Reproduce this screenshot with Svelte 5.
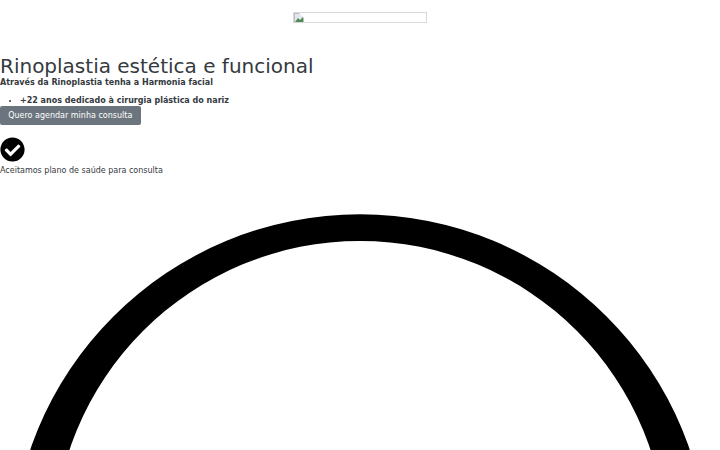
<script>
  const checkPath = "M504 256c0 136.967-111.033 248-248 248S8 392.967 8 256 119.033 8 256 8s248 111.033 248 248zM227.314 387.314l184-184c6.248-6.248 6.248-16.379 0-22.627l-22.627-22.627c-6.248-6.249-16.379-6.249-22.628 0L216 308.118l-70.059-70.059c-6.248-6.248-16.379-6.248-22.628 0l-22.627 22.627c-6.248 6.248-6.248 16.379 0 22.627l104 104c6.249 6.249 16.379 6.249 22.628.001z";
  const ringPath = "M8 256a248 248 0 1 0 496 0a248 248 0 1 0 -496 0zM38 245a218 218 0 1 1 436 0a218 218 0 1 1 -436 0z";
</script>

<main class="page">
  <header class="logo-row">
    <div class="broken-image">
      <svg class="broken-icon" viewBox="0 0 10 10" aria-hidden="true">
        <rect x="0.5" y="0.5" width="9" height="9" fill="#e4e8ee" stroke="#b9bec4" />
        <path d="M1 9 L4 5 L6 7 L9 4 V9 Z" fill="#4f8a55" />
        <path d="M5 0 L10 0 L10 5 Z" fill="#fff" />
      </svg>
    </div>
  </header>

  <section class="hero">
    <h1>Rinoplastia estética e funcional</h1>
    <p class="subtitle">Através da Rinoplastia tenha a Harmonia facial</p>
    <ul>
      <li>+22 anos dedicado à cirurgia plástica do nariz</li>
    </ul>
    <button type="button">Quero agendar minha consulta</button>
  </section>

  <section class="insurance">
    <svg class="check" viewBox="0 0 512 512" aria-hidden="true"><path d={checkPath} /></svg>
    <p>Aceitamos plano de saúde para consulta</p>
  </section>

  <svg class="ring" viewBox="0 0 512 512" aria-hidden="true"><path fill-rule="evenodd" d={ringPath} /></svg>
</main>

<style>
  :global(body) {
    margin: 0;
    background: #fff;
  }
  .page {
    font-family: "DejaVu Sans", sans-serif;
    color: #343a40;
    font-size: 8px;
    overflow-x: hidden;
  }
  .logo-row {
    display: flex;
    justify-content: center;
    padding-top: 12px;
  }
  .broken-image {
    width: 132px;
    height: 9px;
    border: 1px solid #d9d9d9;
    overflow: hidden;
  }
  .broken-icon {
    display: block;
    width: 10px;
    height: 10px;
  }
  h1 {
    margin: 31px 0 0;
    font-size: 20px;
    font-weight: 400;
    line-height: 24px;
  }
  .subtitle {
    margin: 0;
    font-weight: 700;
    line-height: 9px;
  }
  ul {
    margin: 9px 0 0;
    padding: 0 0 0 20px;
    font-weight: 700;
    line-height: 10px;
  }
  button {
    display: block;
    width: 140.5px;
    height: 19px;
    padding: 0;
    border: 0;
    border-radius: 2px;
    background: #6c757d;
    color: #fff;
    font: inherit;
    line-height: 19px;
  }
  .insurance {
    margin-top: 12px;
  }
  .check {
    display: block;
    width: 25px;
    height: 25px;
  }
  .insurance p {
    margin: 4px 0 0;
    line-height: 10px;
  }
  .ring {
    display: block;
    width: 100%;
    height: auto;
    margin-top: 27px;
  }
</style>
